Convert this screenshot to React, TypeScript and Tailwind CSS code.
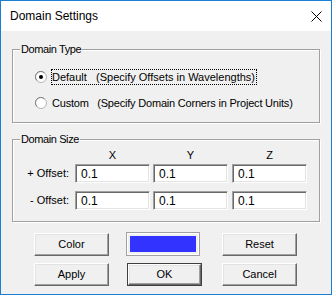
import React from 'react';

const raised =
  'border border-t-white border-l-white border-b-[#696969] border-r-[#696969] shadow-[inset_-1px_-1px_0_#a0a0a0,inset_1px_1px_0_#e3e3e3] bg-[#f0f0f0]';
const sunken =
  'border border-t-[#a0a0a0] border-l-[#a0a0a0] border-b-white border-r-white shadow-[inset_1px_1px_0_#696969,inset_-1px_-1px_0_#e3e3e3] bg-white';

const Radio: React.FC<{ checked?: boolean }> = ({ checked }) => (
  <svg width="12" height="12" viewBox="0 0 12 12" className="shrink-0">
    <circle cx="6" cy="6" r="5.5" fill="white" stroke="#b4b4b4" />
    <path d="M2 9.5 A5 5 0 0 1 9.5 2" fill="none" stroke="#808080" />
    {checked && <circle cx="6" cy="6" r="2" fill="black" />}
  </svg>
);

const Group: React.FC<{ title: string; className: string; children: React.ReactNode }> = ({
  title,
  className,
  children,
}) => (
  <div className={`relative border border-[#a0a0a0] shadow-[inset_1px_1px_0_white,1px_1px_0_white] ${className}`}>
    <span className="absolute -top-[8px] left-[7px] bg-[#f0f0f0] px-[1px] leading-[14px] tracking-[-0.4px]">
      {title}
    </span>
    {children}
  </div>
);

const Field: React.FC<{ value: string; className?: string }> = ({ value, className = '' }) => (
  <div className={`${sunken} w-[75px] h-[19px] flex items-center pl-[5px] text-[12px] ${className}`}>{value}</div>
);

const Button: React.FC<{ label: string; className?: string }> = ({ label, className = '' }) => (
  <button className={`${raised} w-[75px] h-[23px] flex items-center justify-center ${className}`}>{label}</button>
);

export default function App() {
  const rows = ['+ Offset:', '- Offset:'];
  return (
    <div className="w-[332px] h-[295px] border border-[#1a7fd4] flex flex-col text-black text-[11px] [font-family:'Liberation_Sans',Arial,sans-serif]">
      {/* Title bar */}
      <div className="h-[30px] bg-white flex items-center justify-between pl-[9px] pr-[9px] shrink-0">
        <span className="text-[12px]">Domain Settings</span>
        <svg width="11" height="11" viewBox="0 0 11 11">
          <path d="M0.5 0.5 L10.5 10.5 M10.5 0.5 L0.5 10.5" stroke="black" strokeWidth="1" />
        </svg>
      </div>

      {/* Body */}
      <div className="flex-1 bg-[#f0f0f0] px-[11px] pt-[18px]">
        <Group title="Domain Type" className="h-[74px] pt-[19px] pl-[22px]">
          <div className="flex items-center h-[16px] gap-[4px]">
            <Radio checked />
            <span className="border border-dotted border-black leading-[14px] pr-[1px] whitespace-pre">
              Default   (Specify Offsets in Wavelengths)
            </span>
          </div>
          <div className="flex items-center h-[16px] gap-[4px] mt-[10px]">
            <Radio />
            <span className="border border-transparent leading-[14px] whitespace-pre tracking-[-0.2px]">
              Custom   (Specify Domain Corners in Project Units)
            </span>
          </div>
        </Group>

        <Group title="Domain Size" className="h-[83px] mt-[16px] pt-[8px]">
          <div className="flex h-[14px] leading-[14px] mb-[2px]">
            <div className="w-[62px]" />
            <div className="w-[75px] text-center">X</div>
            <div className="w-[75px] text-center ml-[3px]">Y</div>
            <div className="w-[75px] text-center ml-[4px]">Z</div>
          </div>
          {rows.map((r, i) => (
            <div key={r} className={`flex items-center ${i ? 'mt-[8px]' : ''}`}>
              <div className="w-[56px] text-right">{r}</div>
              <Field value="0.1" className="ml-[6px]" />
              <Field value="0.1" className="ml-[3px]" />
              <Field value="0.1" className="ml-[4px]" />
            </div>
          ))}
        </Group>

        <div className="mt-[11px] pl-[22px] flex">
          <Button label="Color" />
          <div className="ml-[17px] -mt-[1px] w-[74px] h-[24px] border border-[#a0a0a0] shadow-[inset_1px_1px_0_white,inset_-1px_-1px_0_white] p-[3px]">
            <div className="w-full h-full bg-[#3333ff]" />
          </div>
          <Button label="Reset" className="ml-[22px]" />
        </div>
        <div className="mt-[7px] pl-[22px] flex">
          <Button label="Apply" />
          <button className="ml-[18px] w-[75px] h-[23px] border border-[#404040] flex">
            <span className={`${raised} flex-1 flex items-center justify-center`}>OK</span>
          </button>
          <Button label="Cancel" className="ml-[20px]" />
        </div>
      </div>
    </div>
  );
}
